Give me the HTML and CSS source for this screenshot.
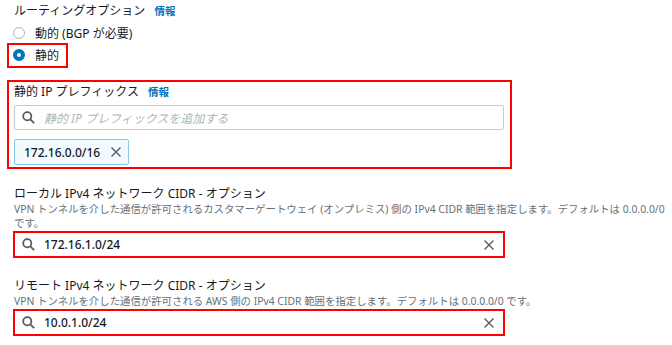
FILE: index.html
```html
<!DOCTYPE html>
<html lang="ja">
<head>
  <meta charset="UTF-8" />
  <meta name="viewport" content="width=device-width, initial-scale=1.0" />
  <title>VPN 接続の作成</title>
  <link rel="stylesheet" href="styles.css">
</head>
<body>
  <div class="form">
    <div class="field">
      <div class="label">ルーティングオプション <a class="info" href="#">情報</a></div>
      <label class="radio"><span class="circle"></span>動的 (BGP が必要)</label>
      <label class="radio checked mark"><span class="circle"></span>静的</label>
    </div>

    <div class="field prefix mark">
      <div class="label">静的 IP プレフィックス <a class="info" href="#">情報</a></div>
      <div class="search">
        <svg class="icon" viewBox="0 0 16 16"><circle cx="6.5" cy="6.5" r="5" /><path d="M10.2 10.2 15 15" /></svg>
        <span class="placeholder">静的 IP プレフィックスを追加する</span>
      </div>
      <div class="token">
        <span>172.16.0.0/16</span>
        <svg class="close" viewBox="0 0 16 16"><path d="M2 2 14 14M14 2 2 14" /></svg>
      </div>
    </div>

    <div class="field cidr">
      <div class="label">ローカル IPv4 ネットワーク CIDR - オプション</div>
      <p class="desc">VPN トンネルを介した通信が許可されるカスタマーゲートウェイ (オンプレミス) 側の IPv4 CIDR 範囲を指定します。デフォルトは 0.0.0.0/0 です。</p>
      <div class="search mark">
        <svg class="icon" viewBox="0 0 16 16"><circle cx="6.5" cy="6.5" r="5" /><path d="M10.2 10.2 15 15" /></svg>
        <span class="value">172.16.1.0/24</span>
        <svg class="close" viewBox="0 0 16 16"><path d="M2 2 14 14M14 2 2 14" /></svg>
      </div>
    </div>

    <div class="field cidr">
      <div class="label">リモート IPv4 ネットワーク CIDR - オプション</div>
      <p class="desc">VPN トンネルを介した通信が許可される AWS 側の IPv4 CIDR 範囲を指定します。デフォルトは 0.0.0.0/0 です。</p>
      <div class="search mark">
        <svg class="icon" viewBox="0 0 16 16"><circle cx="6.5" cy="6.5" r="5" /><path d="M10.2 10.2 15 15" /></svg>
        <span class="value">10.0.1.0/24</span>
        <svg class="close" viewBox="0 0 16 16"><path d="M2 2 14 14M14 2 2 14" /></svg>
      </div>
    </div>
  </div>
</body>
</html>
```

FILE: styles.css
```css
body {
  margin: 0;
  background: #ffffff;
  color: #16191f;
  font-family: "Noto Sans", "Noto Sans CJK JP", sans-serif;
  font-size: 12px;
}

.form {
  width: 658px;
  padding: 2px 0 0 14px;
}

.label {
  line-height: 18px;
  font-size: 12px;
}

.info {
  margin-left: 6px;
  color: #0073bb;
  font-size: 10.5px;
  font-weight: bold;
  text-decoration: none;
}

.radio {
  display: flex;
  align-items: center;
  gap: 10px;
  height: 18px;
  margin-top: 4px;
  width: max-content;
}

.radio .circle {
  width: 12px;
  height: 12px;
  box-sizing: border-box;
  border: 1px solid #aab7b8;
  border-radius: 50%;
  margin-left: -1px;
}

.radio.checked .circle {
  border: 4px solid #0073bb;
}

.radio.mark {
  margin: 1px 0 0 -7px;
  padding: 1px 7px 2px 5px;
  border: 2px solid #ff0000;
}

.field.prefix {
  margin: 12px 0 0 -7px;
  width: 491px;
  padding: 1px 5px 2px 5px;
  border: 2px solid #ff0000;
}

.search {
  display: flex;
  align-items: center;
  height: 25px;
  box-sizing: border-box;
  width: 490px;
  margin-top: 4px;
  padding: 0 9px 0 7px;
  border: 1px solid #c4cccd;
  border-radius: 2px;
}

.search .icon {
  width: 13px;
  height: 13px;
  fill: none;
  stroke: #545b64;
  stroke-width: 2.2;
  margin-right: 9px;
}

.placeholder {
  color: #aab7b8;
  font-style: italic;
}

.token {
  display: inline-flex;
  align-items: center;
  gap: 10px;
  height: 26px;
  box-sizing: border-box;
  margin-top: 9px;
  padding: 0 6px 0 9px;
  background: #f1faff;
  border: 1px solid #8cc8e8;
  border-radius: 2px;
  font-weight: 500;
}

.close {
  width: 12px;
  height: 12px;
  fill: none;
  stroke: #545b64;
  stroke-width: 1.8;
}

.field.cidr {
  margin-top: 17px;
}

.field.cidr .label {
  line-height: 16px;
}

.desc {
  margin: 0 0 1px;
  color: #687078;
  font-size: 10.4px;
  line-height: 14px;
}

.search.mark {
  margin: 0 0 0 -1px;
  width: 492px;
  height: 27px;
  border: 2px solid #ff0000;
  border-radius: 0;
  padding: 0 8px 0 7px;
}

.search .value {
  flex: 1;
  font-weight: 500;
}

.field.cidr + .field.cidr {
  margin-top: 20px;
}
```
